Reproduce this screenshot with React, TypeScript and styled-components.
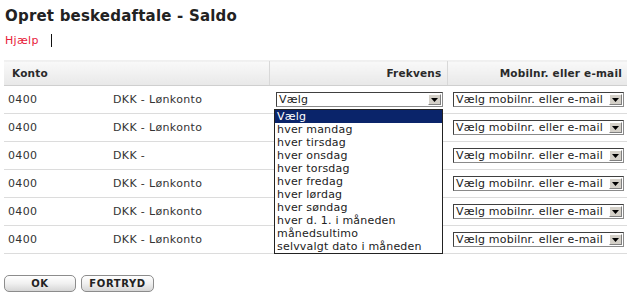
import * as React from "react"
import styled, { createGlobalStyle } from "styled-components"

const GlobalStyle = createGlobalStyle`
  html, body {
    margin: 0;
    padding: 0;
    background: #ffffff;
  }
  body {
    font-family: "DejaVu Sans", Verdana, sans-serif;
    color: #333333;
  }
`

const Page = styled.div`
  width: 630px;
  height: 300px;
  padding: 0 3px 0 4px;
  box-sizing: border-box;
  overflow: hidden;
`

const Title = styled.h1`
  margin: 0;
  padding: 7px 0 0 1px;
  height: 20px;
  font-size: 15px;
  font-weight: bold;
  color: #222222;
  letter-spacing: 0.2px;
`

const HelpBar = styled.div`
  display: flex;
  align-items: center;
  gap: 12px;
  height: 14px;
  margin-top: 6px;
  padding-left: 1px;
`

const HelpLink = styled.a`
  font-size: 11px;
  letter-spacing: 0.3px;
  color: #e8203a;
  text-decoration: none;
`

const Caret = styled.span`
  width: 1px;
  height: 13px;
  background: #111111;
`

const Table = styled.table`
  width: 623px;
  margin-top: 13px;
  border-collapse: collapse;
  table-layout: fixed;
  font-size: 11px;
  letter-spacing: 0.35px;
`

const HeadCell = styled.th<{ $align: "left" | "right"; $divider?: boolean }>`
  height: 24px;
  padding: 0 5px 0 8px;
  text-align: ${props => props.$align};
  font-size: 10.5px;
  font-weight: bold;
  letter-spacing: 0.2px;
  color: #2a2a2a;
  background: linear-gradient(#f9f9f9, #e8e8e8);
  border-bottom: 1px solid #cfcfcf;
  border-top: 1px solid #f0f0f0;
  border-left: ${props => props.$divider ? "1px solid #d8d8d8" : "none"};
`

const Row = styled.tr`
  height: 28px;
  border-bottom: 1px solid #dcdcdc;
`

const Cell = styled.td<{ $pad?: number }>`
  padding: 0 0 0 ${props => props.$pad ?? 4}px;
  white-space: nowrap;
  vertical-align: middle;
  position: relative;
`

const SelectBox = styled.div<{ $width: number }>`
  width: ${props => props.$width}px;
  height: 15px;
  box-sizing: border-box;
  display: flex;
  align-items: center;
  border: 1px solid #8a8a8a;
  border-top-color: #404040;
  border-left-color: #404040;
  background: #ffffff;
  font-size: 11px;
  letter-spacing: 0.2px;
  color: #222222;
`

const SelectText = styled.span`
  flex: 1;
  padding-left: 2px;
  overflow: hidden;
  line-height: 13px;
`

const ArrowBox = styled.span`
  width: 13px;
  height: 11px;
  margin-right: 1px;
  display: flex;
  align-items: center;
  justify-content: center;
  background: #d4d0c8;
  border: 1px solid;
  border-color: #ffffff #808080 #808080 #ffffff;
  box-sizing: border-box;
`

const ListBox = styled.ul`
  position: absolute;
  left: 5px;
  top: 23px;
  width: 167px;
  margin: 0;
  padding: 0;
  list-style: none;
  background: #ffffff;
  border: 1px solid #222222;
  z-index: 2;
`

const ListItem = styled.li<{ $selected?: boolean }>`
  height: 13px;
  line-height: 13px;
  padding-left: 2px;
  font-size: 11px;
  letter-spacing: 0.2px;
  color: ${props => props.$selected ? "#ffffff" : "#222222"};
  background: ${props => props.$selected ? "#0a246a" : "transparent"};
`

const Buttons = styled.div`
  display: flex;
  gap: 5px;
  margin-top: 21px;
`

const Button = styled.button<{ $width: number }>`
  width: ${props => props.$width}px;
  height: 17px;
  padding: 0;
  font-family: "DejaVu Sans", Verdana, sans-serif;
  font-size: 10px;
  font-weight: bold;
  letter-spacing: 0.6px;
  color: #222222;
  border: 1px solid #8c8c8c;
  border-radius: 5px;
  background: linear-gradient(#ffffff, #f0f0f0 50%, #d6d6d6);
`

function Arrow() {
  return <ArrowBox>
    <svg width="7" height="4" viewBox="0 0 7 4">
      <path d="M0 0 H7 L3.5 4 Z" fill="#000000" />
    </svg>
  </ArrowBox>
}

function Select({ text, width }: { text: string, width: number }) {
  return <SelectBox $width={width}>
    <SelectText>{text}</SelectText>
    <Arrow />
  </SelectBox>
}

const options = [
  "Vælg",
  "hver mandag",
  "hver tirsdag",
  "hver onsdag",
  "hver torsdag",
  "hver fredag",
  "hver lørdag",
  "hver søndag",
  "hver d. 1. i måneden",
  "månedsultimo",
  "selvvalgt dato i måneden",
]

const accounts = [
  { konto: "0400", name: "DKK - Lønkonto" },
  { konto: "0400", name: "DKK - Lønkonto" },
  { konto: "0400", name: "DKK -" },
  { konto: "0400", name: "DKK - Lønkonto" },
  { konto: "0400", name: "DKK - Lønkonto" },
  { konto: "0400", name: "DKK - Lønkonto" },
]

export default function App() {
  return <Page>
    <GlobalStyle />
    <Title>Opret beskedaftale - Saldo</Title>
    <HelpBar>
      <HelpLink href="#">Hjælp</HelpLink>
      <Caret />
    </HelpBar>
    <Table>
      <colgroup>
        <col style={{ width: 104 }} />
        <col style={{ width: 161 }} />
        <col style={{ width: 178 }} />
        <col style={{ width: 180 }} />
      </colgroup>
      <thead>
        <tr>
          <HeadCell $align="left" colSpan={2}>Konto</HeadCell>
          <HeadCell $align="right" $divider>Frekvens</HeadCell>
          <HeadCell $align="right" $divider>Mobilnr. eller e-mail</HeadCell>
        </tr>
      </thead>
      <tbody>
        {accounts.map((account, index) =>
          <Row key={index}>
            <Cell>{account.konto}</Cell>
            <Cell $pad={5}>{account.name}</Cell>
            <Cell $pad={7}>
              {index === 0 ? <Select text="Vælg" width={167} /> : null}
              {index === 0 ?
                <ListBox>
                  {options.map((option, i) =>
                    <ListItem key={option} $selected={i === 0}>{option}</ListItem>
                  )}
                </ListBox> : null}
            </Cell>
            <Cell $pad={6}>
              <Select text="Vælg mobilnr. eller e-mail" width={171} />
            </Cell>
          </Row>
        )}
      </tbody>
    </Table>
    <Buttons>
      <Button $width={72}>OK</Button>
      <Button $width={73}>FORTRYD</Button>
    </Buttons>
  </Page>
}
